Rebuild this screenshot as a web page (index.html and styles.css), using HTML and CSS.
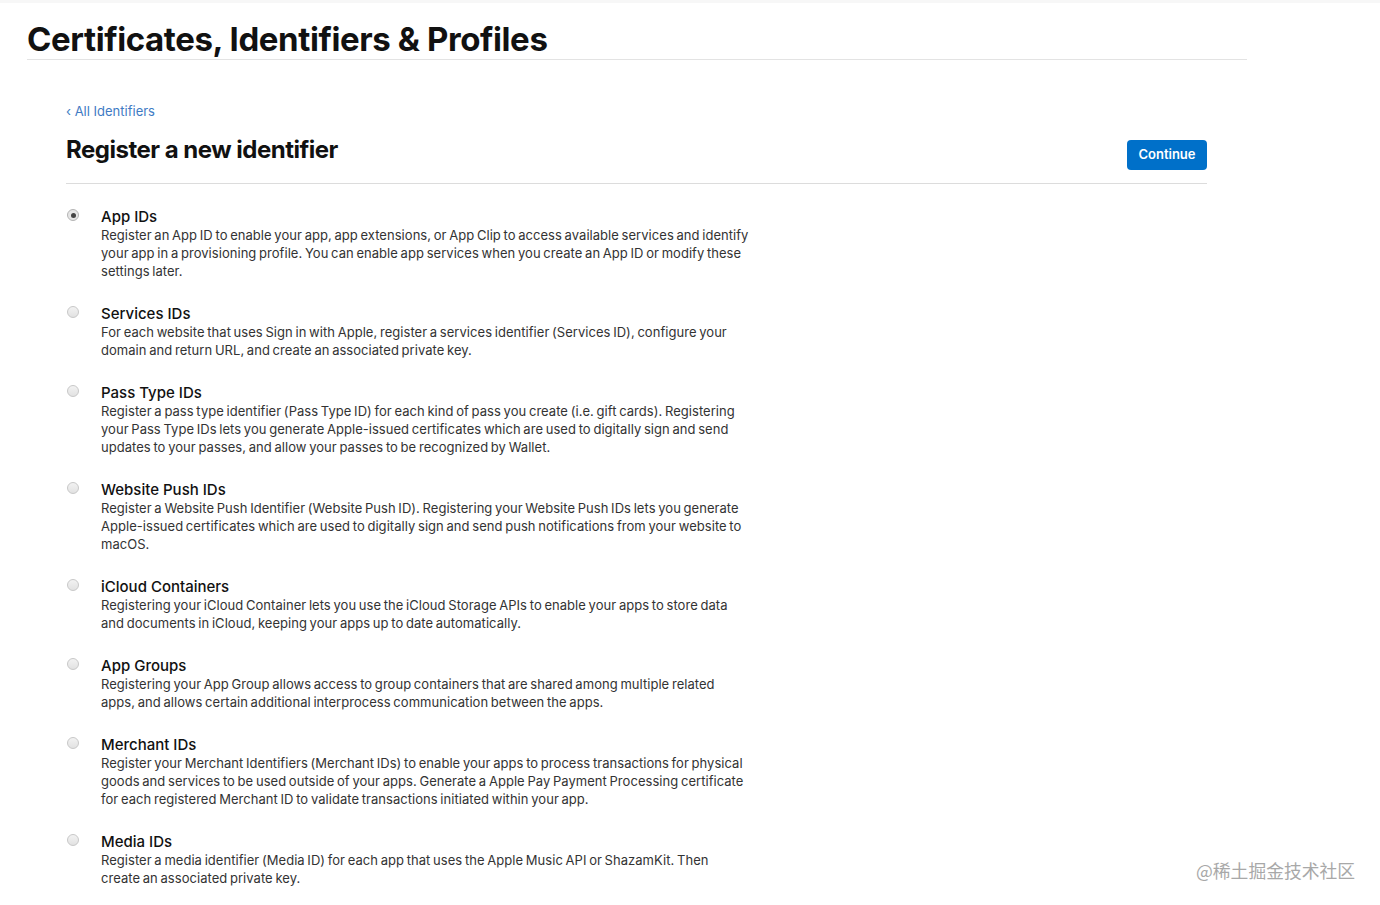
FILE: index.html
```html
<!DOCTYPE html>
<html lang="en">
<head>
<meta charset="utf-8">
<title>Certificates, Identifiers &amp; Profiles</title>
<link rel="stylesheet" href="styles.css">
</head>
<body>
<div class="topband"></div>
<header class="page-header">
  <h1 class="page-title">Certificates, Identifiers &amp; Profiles</h1>
</header>
<main class="content">
  <a class="back-link" href="#">&lsaquo; All Identifiers</a>
  <div class="section-head">
    <h2 class="section-title">Register a new identifier</h2>
    <button class="btn-continue" type="button">Continue</button>
  </div>
  <ul class="options">
    <li class="option">
      <span class="radio checked"></span>
      <div class="option-body">
        <div class="option-title">App IDs</div>
        <p class="option-desc">Register an App ID to enable your app, app extensions, or App Clip to access available services and identify your app in a provisioning profile. You can enable app services when you create an App ID or modify these settings later.</p>
      </div>
    </li>
    <li class="option">
      <span class="radio"></span>
      <div class="option-body">
        <div class="option-title">Services IDs</div>
        <p class="option-desc">For each website that uses Sign in with Apple, register a services identifier (Services ID), configure your domain and return URL, and create an associated private key.</p>
      </div>
    </li>
    <li class="option">
      <span class="radio"></span>
      <div class="option-body">
        <div class="option-title">Pass Type IDs</div>
        <p class="option-desc">Register a pass type identifier (Pass Type ID) for each kind of pass you create (i.e. gift cards). Registering your Pass Type IDs lets you generate Apple-issued certificates which are used to digitally sign and send updates to your passes, and allow your passes to be recognized by Wallet.</p>
      </div>
    </li>
    <li class="option">
      <span class="radio"></span>
      <div class="option-body">
        <div class="option-title">Website Push IDs</div>
        <p class="option-desc">Register a Website Push Identifier (Website Push ID). Registering your Website Push IDs lets you generate Apple-issued certificates which are used to digitally sign and send push notifications from your website to macOS.</p>
      </div>
    </li>
    <li class="option">
      <span class="radio"></span>
      <div class="option-body">
        <div class="option-title">iCloud Containers</div>
        <p class="option-desc">Registering your iCloud Container lets you use the iCloud Storage APIs to enable your apps to store data and documents in iCloud, keeping your apps up to date automatically.</p>
      </div>
    </li>
    <li class="option">
      <span class="radio"></span>
      <div class="option-body">
        <div class="option-title">App Groups</div>
        <p class="option-desc">Registering your App Group allows access to group containers that are shared among multiple related apps, and allows certain additional interprocess communication between the apps.</p>
      </div>
    </li>
    <li class="option">
      <span class="radio"></span>
      <div class="option-body">
        <div class="option-title">Merchant IDs</div>
        <p class="option-desc">Register your Merchant Identifiers (Merchant IDs) to enable your apps to process transactions for physical goods and services to be used outside of your apps. Generate a Apple Pay Payment Processing certificate for each registered Merchant ID to validate transactions initiated within your app.</p>
      </div>
    </li>
    <li class="option">
      <span class="radio"></span>
      <div class="option-body">
        <div class="option-title">Media IDs</div>
        <p class="option-desc">Register a media identifier (Media ID) for each app that uses the Apple Music API or ShazamKit. Then create an associated private key.</p>
      </div>
    </li>
  </ul>
</main>
<div class="watermark">@稀土掘金技术社区</div>
</body>
</html>
```

FILE: styles.css
```css
html, body {
  margin: 0;
  padding: 0;
  background: #ffffff;
}
body {
  font-family: Inter, "Noto Sans", "Liberation Sans", sans-serif;
  color: #111111;
  -webkit-font-smoothing: antialiased;
}
.topband {
  height: 3px;
  background: #f7f7f7;
}
.page-header {
  margin: 0 133px 0 27px;
  border-bottom: 1px solid #e3e3e3;
  padding-top: 17px;
  padding-bottom: 1px;
}
.page-title {
  margin: 0;
  font-size: 33px;
  line-height: 38px;
  font-weight: 700;
  letter-spacing: -0.4px;
  color: #111111;
}
.content {
  margin: 0 173px 0 66px;
  padding-top: 43px;
}
.back-link {
  display: block;
  width: max-content;
  font-size: 13px;
  line-height: 16px;
  color: #3f7bc4;
  text-decoration: none;
}
.section-head {
  display: flex;
  justify-content: space-between;
  align-items: flex-start;
  border-bottom: 1px solid #dcdcdc;
  padding-top: 16px;
  padding-bottom: 13px;
}
.section-title {
  margin: 0;
  font-size: 24px;
  line-height: 30px;
  font-weight: 700;
  letter-spacing: -0.5px;
  color: #111111;
}
.btn-continue {
  box-sizing: border-box;
  margin-top: 5px;
  width: 80px;
  height: 30px;
  border: none;
  border-radius: 4px;
  background: #0070c9;
  color: #ffffff;
  font-family: inherit;
  font-size: 13px;
  font-weight: 600;
  padding: 0 0 3px 0;
  cursor: pointer;
}
.options {
  list-style: none;
  margin: 0;
  padding: 23px 0 0 0;
}
.option {
  display: flex;
  align-items: flex-start;
  margin-bottom: 24px;
}
.radio {
  flex: 0 0 auto;
  box-sizing: border-box;
  width: 12px;
  height: 12px;
  margin: 2px 22px 0 1px;
  border-radius: 50%;
  border: 1px solid #c8c8c8;
  background: linear-gradient(#f2f2f2, #e2e2e2);
  position: relative;
}
.radio.checked {
  background: #e6e6e6;
  border-color: #b5b5b5;
}
.radio.checked::after {
  content: "";
  position: absolute;
  left: 2.5px;
  top: 2.5px;
  width: 5px;
  height: 5px;
  border-radius: 50%;
  background: #444444;
}
.option-body {
  width: 648.3px;
}
.option-title {
  font-size: 15px;
  line-height: 19px;
  font-weight: 500;
  color: #111111;
}
.option-desc {
  margin: 0;
  font-size: 13px;
  line-height: 18px;
  color: #333333;
  letter-spacing: 0.04px;
  word-spacing: -1px;
}
.watermark {
  position: absolute;
  left: 1196px;
  top: 859px;
  font-family: "Noto Sans CJK SC", "Noto Sans", sans-serif;
  font-size: 17.8px;
  line-height: 22px;
  color: #a8a8a8;
}
```
